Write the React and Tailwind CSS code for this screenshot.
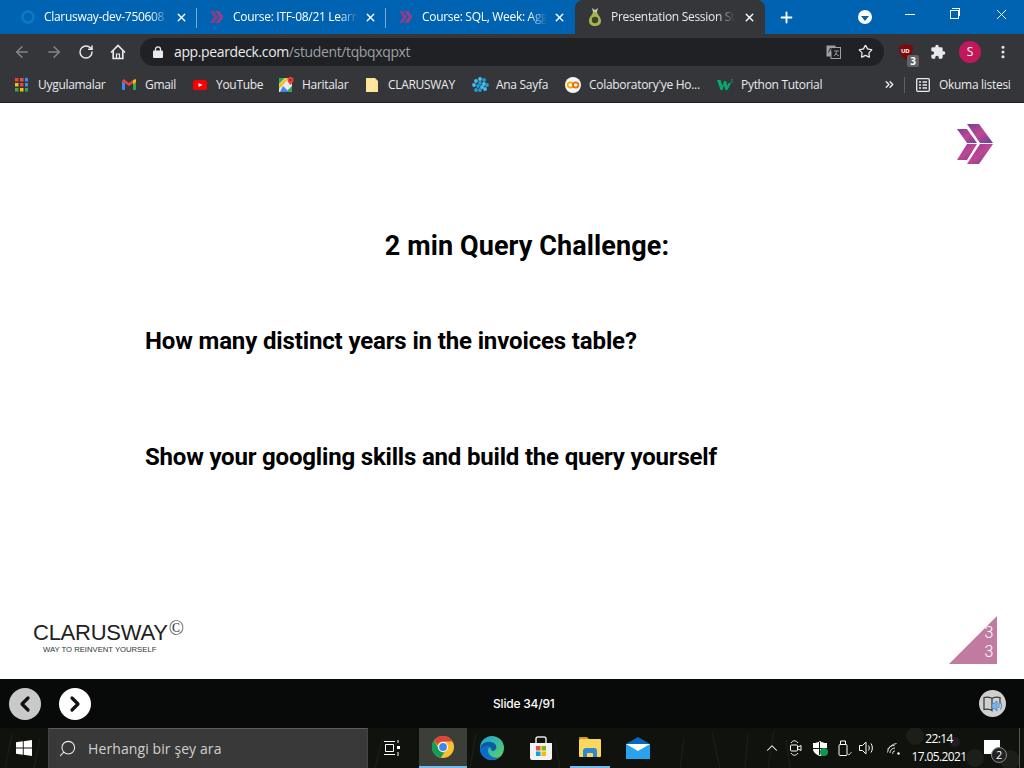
import React from 'react';
import { ArrowLeft, ArrowRight, RotateCw, Star, Plus, X, Search, ChevronUp, ChevronLeft, ChevronRight, ChevronsRight, EllipsisVertical } from 'lucide-react';

const uiFont = { fontFamily: '"Open Sans", "Noto Sans", sans-serif' };

// --- small drawn icons ---
const Chevrons = ({ size = 16 }) => (
  <svg width={size} height={size} viewBox="0 0 16 16">
    <path d="M1 2h4l4 6-4 6H1l4-6z" fill="#80408f" />
    <path d="M6.500 2h4l4 6-4 6h-4l4-6z" fill="#943f86" />
  </svg>
);

const PearIcon = () => (
  <svg width="14" height="20" viewBox="0 0 14 20">
    <path d="M4 1l3 2 3-2-1 4H5z" fill="#c9c9a8" />
    <path d="M5 5h4c.4 2.500 4 5 4 9 0 3.400-2.600 5-6 5s-6-1.600-6-5c0-4 3.600-6.500 4-9z" fill="#a8b356" />
    <circle cx="7" cy="13" r="3.200" fill="#3d4420" />
  </svg>
);

const HomeIcon = () => (
  <svg width="16" height="16" viewBox="0 0 16 16" fill="none" stroke="#e8eaed" strokeWidth="1.700">
    <path d="M1 8.500L8 1.500l7 7" />
    <path d="M3.200 7v7.500h9.600V7" />
    <path d="M6.500 14.500V10h3v4.500" strokeWidth="1.200" />
  </svg>
);

const LockIcon = () => (
  <svg width="10" height="12" viewBox="0 0 10 12">
    <path d="M2.500 5V3.300a2.500 2.500 0 015 0V5" fill="none" stroke="#e8eaed" strokeWidth="1.300" />
    <rect y="4.500" width="10" height="7.500" rx="1" fill="#e8eaed" />
  </svg>
);

const AppsIcon = () => (
  <svg width="13" height="14" viewBox="0 0 13 14">
    {['#ea4335', '#d9534f', '#4285f4', '#fbbc04', '#ea4335', '#4285f4', '#34a853', '#fbbc04', '#34a853'].map((c, i) => (
      <rect key={i} x={(i % 3) * 5} y={Math.floor(i / 3) * 5} width="3.500" height="3.500" fill={c} />
    ))}
  </svg>
);

const GmailIcon = () => (
  <svg width="14" height="11" viewBox="0 0 14 11">
    <path d="M0 2v8a1 1 0 001 1h2V4z" fill="#4285f4" />
    <path d="M14 2v8a1 1 0 01-1 1h-2V4z" fill="#34a853" />
    <path d="M0 2l7 5 7-5-1.500-2L7 4 1.500 0z" fill="#ea4335" />
    <path d="M11 1.500L14 0v3l-3 2.200z" fill="#fbbc04" />
  </svg>
);

const YoutubeIcon = () => (
  <svg width="14" height="10" viewBox="0 0 14 10">
    <rect width="14" height="10" rx="2.500" fill="#f00" />
    <path d="M5.500 3l4 2-4 2z" fill="#fff" />
  </svg>
);

const MapsIcon = () => (
  <svg width="15" height="15" viewBox="0 0 15 15">
    <rect y="1" width="13" height="14" fill="#e8eaed" />
    <path d="M0 1h6L0 7z" fill="#34a853" />
    <path d="M7 15L13 9v6z" fill="#34a853" />
    <path d="M0 15V8l7-7h3L0 12z" fill="#fbbc04" />
    <path d="M4 9l6 6H1z" fill="#4285f4" />
    <path d="M11.500 0a3 3 0 013 3c0 2-3 5-3 5s-3-3-3-5a3 3 0 013-3z" fill="#ea4335" />
    <circle cx="11.500" cy="3" r="1" fill="#8c1d18" />
  </svg>
);

const FolderNote = () => (
  <svg width="12" height="14" viewBox="0 0 12 14">
    <path d="M0 0h9l3 3v11H0z" fill="#fde293" />
    <path d="M1 1h7.500v12H1z" fill="#fbe79f" />
  </svg>
);

const SplashIcon = () => (
  <svg width="17" height="15" viewBox="0 0 17 15">
    {[[8, 2], [12, 3], [4, 4], [8, 6], [12, 7], [15, 8], [2, 8], [6, 9], [10, 10], [4, 13], [13, 12], [8, 13]].map(([x, y], i) => (
      <circle key={i} cx={x} cy={y} r="1.900" fill={i % 2 ? '#1e9ad6' : '#45c1f0'} />
    ))}
  </svg>
);

const ColabIcon = () => (
  <svg width="16" height="16" viewBox="0 0 16 16">
    <circle cx="8" cy="8" r="8" fill="#f5f5f5" />
    <circle cx="5.300" cy="8" r="2.700" fill="none" stroke="#f9ab00" strokeWidth="1.800" />
    <circle cx="10.700" cy="8" r="2.700" fill="none" stroke="#e8710a" strokeWidth="1.800" />
  </svg>
);

const W3Icon = () => (
  <svg width="16" height="12" viewBox="0 0 16 12">
    <path d="M0 1h3.500l2 6 1.500-5h2l1.500 5 1-3h2.500L10.500 11h-2L7 6.500 5.500 11h-2z" fill="#04aa6d" />
    <path d="M13.500 0h2v.6l-.8.8c.6 0 1 .4 1 1s-.5 1-1.200 1h-1v-.6h1c.3 0 .5-.1.5-.4s-.2-.4-.6-.4v-.5l.7-.9h-1.100z" fill="#04aa6d" />
  </svg>
);

const ReadingIcon = () => (
  <svg width="14" height="14" viewBox="0 0 14 14" fill="none" stroke="#e8eaed" strokeWidth="1.300">
    <rect x=".7" y=".7" width="12.600" height="12.600" rx="1" />
    <path d="M3 4h2M6.500 4H11M3 7h2M6.500 7H11M3 10h2M6.500 10H11" />
  </svg>
);

const TranslateIcon = () => (
  <svg width="15" height="14" viewBox="0 0 15 14">
    <rect x=".5" y=".5" width="9" height="11" fill="#9aa0a6" />
    <rect x="5" y="2.500" width="9.500" height="11" fill="#202124" stroke="#9aa0a6" />
    <path d="M2.500 7.500L4.500 3l2 4.500" fill="none" stroke="#202124" strokeWidth=".9" />
    <path d="M8 6h5M10.500 6c0 2.500-1 4-2.500 5M9.500 8c.8 1.500 2 2.500 3.500 3" fill="none" stroke="#9aa0a6" strokeWidth=".9" />
  </svg>
);

const UblockIcon = () => (
  <span className="relative flex h-[16px] w-[16px]">
    <svg width="14" height="16" viewBox="0 0 14 16">
      <path d="M7 0l7 2c0 6-1.500 11-7 14C1.500 13 0 8 0 2z" fill="#7b0b0b" />
    </svg>
    <span className="absolute left-[2px] top-[2px] text-[6px] font-bold leading-[10px] text-white">UD</span>
    <span className="absolute left-[8px] top-[11px] flex h-[12px] w-[12px] items-center justify-center rounded-[2px] bg-[#5f6368] text-[10px] font-bold leading-none text-white">3</span>
  </span>
);

const PuzzleIcon = () => (
  <svg width="16" height="16" viewBox="0 0 24 24" fill="#e8eaed">
    <path d="M20.500 11H19V7a2 2 0 00-2-2h-4V3.500a2.500 2.500 0 00-5 0V5H4a2 2 0 00-2 2v3.800h1.500a2.700 2.700 0 010 5.400H2V20a2 2 0 002 2h3.800v-1.500a2.700 2.700 0 015.400 0V22H17a2 2 0 002-2v-4h1.500a2.500 2.500 0 000-5z" />
  </svg>
);

const WindowsLogo = () => (
  <svg width="16" height="16" viewBox="0 0 16 16" fill="#fff">
    <path d="M0 2.300L6.800 1.300v6.200H0zM7.700 1.200L16 0v7.500H7.700zM0 8.400h6.800v6.300L0 13.700zM7.700 8.400H16V16l-8.300-1.200z" />
  </svg>
);

const TaskView = () => (
  <svg width="17" height="16" viewBox="0 0 17 16" fill="none" stroke="#fff" strokeWidth="1">
    <path d="M0 1.500h11M0 14.500h11M1.500 4.500h8v7h-8z" />
    <path d="M14 0v3M14 12v4" />
    <rect x="13" y="6" width="3" height="3" fill="#fff" stroke="none" />
  </svg>
);

const ChromeIcon = () => (
  <svg width="22" height="22" viewBox="0 0 24 24">
    <circle cx="12" cy="12" r="12" fill="#fbc02d" />
    <path d="M12 0a12 12 0 0110.400 6H12a6 6 0 00-5.700 4L2.200 4.700A12 12 0 0112 0z" fill="#db4437" />
    <path d="M2.200 4.700l5.200 9.500a6 6 0 006.300 3.600L9.500 23.700A12 12 0 012.200 4.700z" fill="#0f9d58" />
    <circle cx="12" cy="12" r="5.500" fill="#fff" />
    <circle cx="12" cy="12" r="4.300" fill="#4285f4" />
  </svg>
);

const EdgeIcon = () => (
  <svg width="24" height="24" viewBox="0 0 24 24">
    <defs>
      <linearGradient id="edgeA" x1="0" y1="0" x2="1" y2="1">
        <stop offset="0" stopColor="#1ba3dd" />
        <stop offset="1" stopColor="#5fd35c" />
      </linearGradient>
    </defs>
    <circle cx="12" cy="12" r="12" fill="url(#edgeA)" />
    <path d="M0 13C1 7 6 5 11 6c5 1 7 5 4 8-2 1.800-4 .5-4-1 0-2-3-3.500-6-2-3 1.500-4 4-5 2z" fill="#0c59a4" />
    <path d="M0 13c0 6 5 11 12 11 3 0 6-1 8-3-4 1.500-9 .5-11-3s-1-6 1-7c-4-1.500-9 0-10 2z" fill="#0b6cc9" />
  </svg>
);

const StoreIcon = () => (
  <svg width="24" height="24" viewBox="0 0 24 24">
    <path d="M7 7V3a2 2 0 012-2h6a2 2 0 012 2v4" fill="none" stroke="#e5e5e5" strokeWidth="1.500" />
    <path d="M1 7h22v15a2 2 0 01-2 2H3a2 2 0 01-2-2z" fill="#f3f3f3" />
    <rect x="7" y="10" width="4.500" height="4.500" fill="#f25022" />
    <rect x="12.500" y="10" width="4.500" height="4.500" fill="#7fba00" />
    <rect x="7" y="15.500" width="4.500" height="4.500" fill="#00a4ef" />
    <rect x="12.500" y="15.500" width="4.500" height="4.500" fill="#ffb900" />
  </svg>
);

const ExplorerIcon = () => (
  <svg width="22" height="20" viewBox="0 0 22 20">
    <path d="M0 1a1 1 0 011-1h7l2 2H0z" fill="#d99a0b" />
    <rect y="2" width="22" height="16" rx="1" fill="#f8d568" />
    <path d="M0 5h22v14a1 1 0 01-1 1H1a1 1 0 01-1-1z" fill="#fbd75b" />
    <path d="M4 14a3 3 0 013-3h8a3 3 0 013 3v6h-4v-3a1 1 0 00-1-1H9a1 1 0 00-1 1v3H4z" fill="#2f88d0" />
  </svg>
);

const MailIcon = () => (
  <svg width="24" height="22" viewBox="0 0 24 22">
    <path d="M12 0l12 7v15H0V7z" fill="#0b67bd" />
    <path d="M0 7h24v15H0z" fill="#29a3ee" />
    <path d="M0 7h24L12 14z" fill="#fff" />
  </svg>
);

const MeetIcon = () => (
  <svg width="12" height="16" viewBox="0 0 12 16" fill="none" stroke="#fff" strokeWidth="1">
    <path d="M1 3c2-3 5-3 7 0M1 13c2 3 5 3 7 0" />
    <rect x=".5" y="5" width="7" height="6" rx="1" />
    <path d="M8 7l3-1.500v5L8 9" />
  </svg>
);

const ShieldIcon = () => (
  <span className="relative flex">
    <svg width="14" height="15" viewBox="0 0 14 15">
      <path d="M7 0c2 1.500 4 2 7 2v6c0 3-3 5.500-7 7-4-1.500-7-4-7-7V2c3 0 5-.5 7-2z" fill="#fff" />
      <path d="M6.500 1v13M0 7.500h14" stroke="#111" strokeWidth="1" />
    </svg>
    <span className="absolute left-[7px] top-[7px] h-[8px] w-[8px] rounded-full bg-[#109648]" />
  </span>
);

const UsbIcon = () => (
  <svg width="14" height="16" viewBox="0 0 14 16" fill="none" stroke="#fff" strokeWidth="1">
    <path d="M2.500 4.500V1h5v3.500" />
    <rect x="1" y="4.500" width="8" height="11" rx="1" />
    <path d="M9.500 14l1.500 1 2.500-3" stroke="#bbb" />
  </svg>
);

const VolumeIcon = () => (
  <svg width="16" height="14" viewBox="0 0 16 14" fill="none" stroke="#fff" strokeWidth="1">
    <path d="M.5 4.500h3L7 1v12L3.500 9.500h-3z" />
    <path d="M9.500 4.500c1 1.500 1 3.500 0 5M12 2.500c1.800 2.500 1.800 6.500 0 9" />
  </svg>
);

const WifiIcon = () => (
  <svg width="13" height="13" viewBox="0 0 13 13" fill="none" stroke="#ddd" strokeWidth="1">
    <path d="M.5 7.500a8 8 0 017-4M.5 10.500a10 10 0 019-9M3 11a5 5 0 015-5" />
    <path d="M6 12a2 2 0 012-3" />
    <circle cx="11.500" cy="11.500" r="1.200" fill="#fff" stroke="none" />
  </svg>
);

const BookSpeaker = () => (
  <svg width="20" height="16" viewBox="0 0 20 16" fill="none">
    <path d="M1 1.500c3-.7 6-.7 8 1v12c-2-1.500-5-1.700-8-1zM9 2.500c2-1.700 5-1.700 8-1v6" stroke="#333" strokeWidth="1.200" />
    <path d="M9 7.500h2L14 5v10l-3-2.500H9z" fill="#7db6e3" stroke="#2f86cf" strokeWidth=".8" />
    <path d="M15.500 7.500c.8 1.300.8 3 0 4.500M17.500 6c1.300 2 1.300 5.500 0 7.500" stroke="#2f86cf" strokeWidth="1" />
  </svg>
);

const SlideLogo = () => (
  <svg width="37" height="41" viewBox="0 0 37 41">
    <defs>
      <linearGradient id="chev" x1="0" y1="0" x2="1" y2="1">
        <stop offset="0" stopColor="#7a3fa0" />
        <stop offset=".5" stopColor="#c0468f" />
        <stop offset="1" stopColor="#6a3fa5" />
      </linearGradient>
    </defs>
    <path d="M0 5h10l10 14H10z" fill="url(#chev)" />
    <path d="M10 20h10L10 36H0z" fill="url(#chev)" />
    <path d="M10 0h12l14 19H23z" fill="url(#chev)" />
    <path d="M23 20h13L22 40H10z" fill="url(#chev)" />
  </svg>
);

// faint wallpaper behind the taskbar: grass on the left, dandelions on the right
const Wallpaper = () => (
  <svg className="absolute inset-0" width="1024" height="40" viewBox="0 0 1024 40" fill="none">
    <path d="M5 40L12 6M34 40L40 10M375 40l8-30M470 40l6-34M560 40l-5-28M680 40l4-30M720 40l-8-36M745 40l3-34M768 40l6-38M790 40l-4-28" stroke="#1d2219" strokeWidth="1" />
    <circle cx="915" cy="8" r="9" fill="#1c1f18" />
    <circle cx="975" cy="30" r="9" fill="#1c1f18" />
    <circle cx="1010" cy="32" r="10" fill="#1c1f18" />
    <circle cx="955" cy="14" r="5" fill="#211c2a" />
  </svg>
);

// --- browser chrome ---
const Tab = ({ icon, title, divider }) => (
  <div className="relative flex h-[34px] w-[189px] shrink-0 items-center pl-[12px] pr-[8px]">
    <span className="flex w-[16px] shrink-0 items-center justify-center">{icon}</span>
    <span className="ml-[8px] w-[125px] overflow-hidden whitespace-nowrap text-[12px] text-white [mask-image:linear-gradient(to_right,#000_85%,transparent)]">{title}</span>
    <X size={13} strokeWidth={2.6} className="ml-[6px] text-white" />
    {divider && <span className="absolute right-0 top-[8px] h-[20px] w-px bg-[#7ba7d0]" />}
  </div>
);

const Bookmark = ({ icon, label, gap = 'ml-[9px]', width }) => (
  <div className={`flex items-center ${width}`}>
    {icon}
    <span className={`${gap} whitespace-nowrap text-[12px] text-[#e8eaed]`}>{label}</span>
  </div>
);

export default function App() {
  return (
    <div className="flex h-[768px] w-[1024px] flex-col overflow-hidden bg-white tracking-[-0.3px]" style={uiFont}>
      {/* tab strip */}
      <div className="flex h-[34px] shrink-0 items-center bg-[#0063b1] pl-[8px]">
        <Tab divider title="Clarusway-dev-750608" icon={<span className="h-[14px] w-[14px] rounded-full border-[3px] border-[#0a78c2]" />} />
        <Tab divider title="Course: ITF-08/21 Learn" icon={<Chevrons />} />
        <Tab title="Course: SQL, Week: Agg" icon={<Chevrons />} />
        <div className="flex h-[34px] w-[190px] shrink-0 items-center rounded-t-[8px] bg-[#35363a] pl-[12px] pr-[8px]">
          <span className="flex w-[16px] shrink-0 items-center justify-center"><PearIcon /></span>
          <span className="ml-[8px] w-[124px] overflow-hidden whitespace-nowrap text-[12px] text-[#e8eaed] [mask-image:linear-gradient(to_right,#000_85%,transparent)]">Presentation Session Student</span>
          <X size={13} strokeWidth={2.6} className="ml-[8px] text-white" />
        </div>
        <Plus size={17} strokeWidth={2.6} className="ml-[13px] text-white" />
        <span className="ml-[63px] flex h-[14px] w-[14px] items-center justify-center rounded-full bg-white">
          <span className="mt-[2px] border-x-[4px] border-t-[5px] border-x-transparent border-t-[#0063b1]" />
        </span>
        <span className="ml-[33px] mb-[6px] h-px w-[10px] bg-white" />
        <span className="relative ml-[35px] mb-[6px] h-[9px] w-[9px] border border-white">
          <span className="absolute left-[1px] top-[-3px] h-[8px] w-[8px] border-r border-t border-white" />
        </span>
        <X size={17} strokeWidth={1.4} className="ml-[34px] mb-[6px] text-white" />
      </div>

      {/* toolbar */}
      <div className="flex h-[34px] shrink-0 items-center bg-[#35363a] pl-[13px] pt-[1px]">
        <ArrowLeft size={18} strokeWidth={2} className="text-[#80868b]" />
        <ArrowRight size={18} strokeWidth={2} className="ml-[14px] text-[#80868b]" />
        <RotateCw size={16} strokeWidth={2.2} className="ml-[15px] text-[#e8eaed]" />
        <span className="ml-[16px]"><HomeIcon /></span>
        <div className="ml-[14px] flex h-[28px] w-[744px] items-center rounded-full bg-[#202124] pl-[13px] text-[14px] tracking-[-0.37px]">
          <LockIcon />
          <span className="ml-[11px] text-[#e8eaed]">app.peardeck.com<span className="text-[#9aa0a6]">/student/tqbqxqpxt</span></span>
          <span className="ml-auto"><TranslateIcon /></span>
          <Star size={15} strokeWidth={2} className="ml-[17px] mr-[11px] text-[#e8eaed]" />
        </div>
        <span className="ml-[15px]"><UblockIcon /></span>
        <span className="ml-[15px]"><PuzzleIcon /></span>
        <span className="ml-[13px] flex h-[22px] w-[22px] items-center justify-center rounded-full bg-[#c2185b] text-[12px] text-white">S</span>
        <EllipsisVertical size={16} strokeWidth={2.6} className="ml-[14px] text-[#e8eaed]" />
      </div>

      {/* bookmarks */}
      <div className="flex h-[35px] shrink-0 items-center border-b border-[#1f2023] bg-[#35363a] pb-[1px] pl-[15px]">
        <Bookmark width="w-[107px]" icon={<AppsIcon />} label="Uygulamalar" gap="ml-[10px]" />
        <Bookmark width="w-[71px]" icon={<GmailIcon />} label="Gmail" />
        <Bookmark width="w-[86px]" icon={<YoutubeIcon />} label="YouTube" />
        <Bookmark width="w-[87px]" icon={<MapsIcon />} label="Haritalar" gap="ml-[8px]" />
        <Bookmark width="w-[106px]" icon={<FolderNote />} label="CLARUSWAY" gap="ml-[10px]" />
        <Bookmark width="w-[93px]" icon={<SplashIcon />} label="Ana Sayfa" gap="ml-[7px]" />
        <Bookmark width="w-[152px]" icon={<ColabIcon />} label="Colaboratory'ye Ho..." gap="ml-[8px]" />
        <Bookmark width="w-[166px]" icon={<W3Icon />} label="Python Tutorial" gap="ml-[8px]" />
        <ChevronsRight size={13} strokeWidth={2.6} className="text-[#e8eaed]" />
        <span className="ml-[8px] h-[16px] w-px bg-[#5f6368]" />
        <span className="ml-[11px]"><ReadingIcon /></span>
        <span className="ml-[9px] whitespace-nowrap text-[12px] text-[#e8eaed]">Okuma listesi</span>
      </div>

      {/* slide */}
      <div className="flex h-[576px] shrink-0 flex-col bg-white pl-[145px] text-black" style={{ fontFamily: 'Roboto, "Liberation Sans", sans-serif' }}>
        <div className="flex justify-end pr-[30px] pt-[21px]"><SlideLogo /></div>
        <h1 className="mt-[65px] w-[764px] text-center text-[27px] font-bold leading-[32px] tracking-[0.1px]">2 min Query Challenge:</h1>
        <p className="mt-[65px] text-[24px] font-bold leading-[28px] tracking-[-0.14px]">How many distinct years in the invoices table?</p>
        <p className="mt-[88px] text-[24px] font-bold leading-[28px] tracking-[-0.19px]">Show your googling skills and build the query yourself</p>
        <div className="mt-auto -ml-[145px] flex items-end justify-between pb-[15px] pl-[33px] pr-[27px]">
          <div className="mb-[9px]" style={{ fontFamily: '"Liberation Sans", sans-serif' }}>
            <div className="flex items-start">
              <span className="text-[22px] leading-[24px] tracking-[-0.25px] text-[#222]">CLARUSWAY</span>
              <span className="ml-[1px] -mt-[3px] text-[20px] leading-[20px] tracking-normal text-[#444]" style={{ fontFamily: '"Liberation Serif", serif' }}>©</span>
            </div>
            <div className="ml-[10px] text-[7.7px] leading-[10px] tracking-normal text-[#333]">WAY TO REINVENT YOURSELF</div>
          </div>
          <div className="flex h-[48px] w-[48px] flex-col items-end justify-end bg-[#c27ba0] pb-[3px] pr-[4px] text-[16px] font-light leading-[19px] text-white [clip-path:polygon(100%_0,100%_100%,0_100%)]">
            <span>3</span>
            <span>3</span>
          </div>
        </div>
      </div>

      {/* slide nav */}
      <div className="flex h-[49px] shrink-0 items-center bg-[#080a0a] pl-[9px]">
        <span className="flex h-[32px] w-[32px] items-center justify-center rounded-full bg-[#c9c9c9]"><ChevronLeft size={24} strokeWidth={3.2} className="text-[#111]" /></span>
        <span className="ml-[18px] flex h-[32px] w-[32px] items-center justify-center rounded-full bg-white"><ChevronRight size={24} strokeWidth={3.2} className="text-[#111]" /></span>
        <span className="ml-[402px] text-[12px] font-medium tracking-[-0.2px] text-white" style={{ fontFamily: 'Inter, sans-serif' }}>Slide 34/91</span>
        <span className="ml-auto mr-[18px] flex h-[27px] w-[27px] items-center justify-center rounded-full bg-[#cfcfcf]"><BookSpeaker /></span>
      </div>

      {/* taskbar */}
      <div className="relative flex h-[40px] shrink-0 items-center bg-[#10130d] pl-[16px]">
        <Wallpaper />
        <span className="relative"><WindowsLogo /></span>
        <div className="relative ml-[16px] flex h-[40px] w-[320px] items-center border-x border-t border-x-[#444] border-t-[#5c5c5c] bg-[#393939] pl-[9px] tracking-[0.1px]">
          <Search size={19} strokeWidth={1.3} className="-scale-x-100 text-[#eee]" />
          <span className="ml-[11px] text-[14px] text-[#d0d0d0]">Herhangi bir şey ara</span>
        </div>
        <span className="relative ml-[16px]"><TaskView /></span>
        <div className="relative ml-[18px] flex h-[40px] w-[48px] items-center justify-center border-b-[2px] border-[#76b9ed] bg-[#3b3f38]"><ChromeIcon /></div>
        <span className="relative ml-[13px]"><EdgeIcon /></span>
        <span className="relative ml-[25px]"><StoreIcon /></span>
        <div className="relative ml-[17px] flex h-[40px] w-[40px] items-center justify-center border-b-[2px] border-[#76b9ed]"><ExplorerIcon /></div>
        <span className="relative ml-[16px]"><MailIcon /></span>
        <ChevronUp size={18} strokeWidth={1.4} className="relative ml-[113px] text-white" />
        <span className="relative ml-[9px]"><MeetIcon /></span>
        <span className="relative ml-[11px]"><ShieldIcon /></span>
        <span className="relative ml-[11px]"><UsbIcon /></span>
        <span className="relative ml-[7px]"><VolumeIcon /></span>
        <span className="relative ml-[12px]"><WifiIcon /></span>
        <div className="relative ml-[12px] flex w-[54px] flex-col items-center whitespace-nowrap text-[12px] leading-[18px] tracking-[-0.6px] text-white">
          <span>22:14</span>
          <span>17.05.2021</span>
        </div>
        <span className="relative ml-[18px] mb-[3px] h-[14px] w-[16px] bg-white">
          <span className="absolute left-[7px] top-[7px] flex h-[16px] w-[16px] items-center justify-center rounded-full border border-[#888] bg-[#222] text-[11px] leading-none text-white">2</span>
        </span>
        <span className="absolute right-[4px] top-0 h-[40px] w-px bg-[#555]" />
      </div>
    </div>
  );
}
